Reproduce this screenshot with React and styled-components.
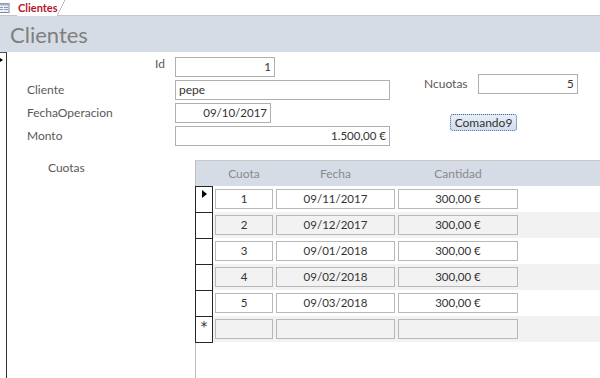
import React from 'react'
import styled, { createGlobalStyle } from 'styled-components'

const GlobalStyle = createGlobalStyle`
  html, body { margin: 0; padding: 0; background: #fff; }
  body { font-family: Lato, "Liberation Sans", sans-serif; }
`

const cuotas = [
  { n: 1, fecha: '09/11/2017', cantidad: '300,00 €' },
  { n: 2, fecha: '09/12/2017', cantidad: '300,00 €' },
  { n: 3, fecha: '09/01/2018', cantidad: '300,00 €' },
  { n: 4, fecha: '09/02/2018', cantidad: '300,00 €' },
  { n: 5, fecha: '09/03/2018', cantidad: '300,00 €' },
]

const Window = styled.div`
  width: 600px;
  height: 378px;
  display: flex;
  flex-direction: column;
  overflow: hidden;
  background: #fff;
`

const TabBar = styled.div`
  height: 15px;
  display: flex;
  align-items: stretch;
  border-bottom: 1px solid #c6c6c6;
  background: #fff;
`

const TabIcon = styled.svg`
  width: 10px;
  height: 10px;
  margin: 3px 0 0 0;
`

const Tab = styled.div`
  position: relative;
  margin-left: 7px;
  margin-bottom: -1px;
  padding: 0 2px 0 1px;
  width: 38px;
  background: #fff;
  color: #b3162c;
  font-size: 11px;
  font-weight: 700;
  line-height: 15px;
  &::after {
    content: '';
    position: absolute;
    top: 0;
    right: -7px;
    width: 8px;
    height: 16px;
    background: linear-gradient(to top left, transparent calc(50% - 0.6px), #9a9a9a, transparent calc(50% + 0.6px));
  }
`

const Header = styled.div`
  height: 36px;
  background: #d6dce5;
  display: flex;
  align-items: center;
  padding-left: 10px;
`

const Title = styled.div`
  font-size: 22px;
  color: #7f7f7f;
  line-height: 22px;
  padding-top: 1px;
`

const Body = styled.div`
  flex: 1;
  display: flex;
  min-height: 0;
`

const FormSelector = styled.div`
  width: 6px;
  border-right: 1px solid #333;
  border-top: 1px solid #555;
  padding-top: 5px;
`

const SmallArrow = styled.div`
  width: 0;
  height: 0;
  border-top: 2px solid transparent;
  border-bottom: 2px solid transparent;
  border-left: 3px solid #000;
`

const Detail = styled.div`
  flex: 1;
  display: flex;
  flex-direction: column;
`

const TopArea = styled.div`
  display: flex;
  align-items: flex-start;
`

const FieldGrid = styled.div`
  display: grid;
  grid-template-columns: 148px auto;
  grid-auto-rows: 20px;
  row-gap: 3px;
  padding: 5px 0 0 20px;
`

const Label = styled.div`
  font-size: 12px;
  color: #595959;
  line-height: 16px;
  align-self: ${p => (p.$raise ? 'start' : 'center')};
  justify-self: ${p => (p.$right ? 'end' : 'start')};
  padding-right: ${p => (p.$right ? '10px' : '0')};
  margin-top: ${p => (p.$raise ? '-1px' : '0')};
`

const Field = styled.div`
  box-sizing: border-box;
  width: ${p => p.$w}px;
  height: 20px;
  border: 1px solid #b0b0b0;
  background: #fff;
  padding: 0 3px;
  font-size: ${p => (p.$num ? '11.5px' : '12px')};
  color: #333;
  line-height: 18px;
  text-align: ${p => p.$align || 'left'};
  white-space: nowrap;
`

const SidePanel = styled.div`
  display: flex;
  flex-direction: column;
  align-items: flex-start;
  margin-left: 34px;
  padding-top: 22px;
`

const InlineRow = styled.div`
  display: flex;
  align-items: center;
  gap: 10px;
`

const CommandButton = styled.button`
  box-sizing: border-box;
  margin: 20px 0 0 26px;
  width: 67px;
  height: 17px;
  padding: 0;
  border: 1px dotted #3f67a6;
  border-radius: 3px;
  background: linear-gradient(#e9eff8, #d2ddec);
  font-family: Lato, "Liberation Sans", sans-serif;
  font-size: 12px;
  color: #333;
  line-height: 15px;
`

const SubArea = styled.div`
  flex: 1;
  display: flex;
  margin-top: 14px;
`

const SubLabel = styled.div`
  box-sizing: border-box;
  width: 188px;
  padding-left: 41px;
  font-size: 12px;
  color: #595959;
  line-height: 16px;
`

const Subform = styled.div`
  flex: 1;
  border-left: 1px solid #bdbdbd;
  border-top: 1px solid #c8c8c8;
`

const SubHeader = styled.div`
  height: 25px;
  background: #d6dce5;
  display: flex;
  align-items: center;
  padding-left: 19px;
  gap: 3px;
`

const HeadCell = styled.div`
  width: ${p => p.$w}px;
  text-align: center;
  font-size: 12px;
  color: #8a8a8a;
`

const Row = styled.div`
  height: 26px;
  display: flex;
  align-items: stretch;
  background: ${p => (p.$alt ? '#f2f2f2' : '#fff')};
`

const RowSelector = styled.div`
  box-sizing: border-box;
  width: 18px;
  margin-left: -1px;
  border: 1px solid #262626;
  border-bottom: ${p => (p.$last ? '1px solid #262626' : 'none')};
  height: ${p => (p.$last ? '27px' : '26px')};
  background: #fff;
  display: flex;
  justify-content: center;
  padding-top: 3px;
`

const Pointer = styled.div`
  width: 0;
  height: 0;
  border-top: 4.5px solid transparent;
  border-bottom: 4.5px solid transparent;
  border-left: 5px solid #000;
  margin-left: 1px;
`

const NewMark = styled.div`
  font-size: 14px;
  line-height: 12px;
  color: #333;
  font-family: "DejaVu Sans", sans-serif;
`

const Cells = styled.div`
  display: flex;
  align-items: center;
  gap: 3px;
  padding-left: 2px;
`

const Cell = styled.div`
  box-sizing: border-box;
  width: ${p => p.$w}px;
  height: 20px;
  border: 1px solid #b8b8b8;
  background: ${p => (p.$alt ? '#f2f2f2' : '#fff')};
  text-align: center;
  font-size: 11.5px;
  color: #333;
  line-height: 18px;
`

const widths = [58, 119, 120]

const App = () => {
  return (
    <>
      <GlobalStyle />
      <Window>
        <TabBar>
          <TabIcon viewBox="0 0 10 10">
            <rect x="-3" y="0.5" width="12" height="9" fill="#eef2f7" stroke="#7d8ba0" />
            <rect x="-3" y="0.5" width="12" height="2" fill="#9fb1c9" />
            <line x1="-2" y1="4.5" x2="3" y2="4.5" stroke="#8a9ab0" />
            <line x1="4" y1="4.5" x2="8" y2="4.5" stroke="#8a9ab0" />
            <line x1="-2" y1="6.5" x2="3" y2="6.5" stroke="#8a9ab0" />
            <line x1="4" y1="6.5" x2="8" y2="6.5" stroke="#8a9ab0" />
          </TabIcon>
          <Tab>Clientes</Tab>
        </TabBar>
        <Header>
          <Title>Clientes</Title>
        </Header>
        <Body>
          <FormSelector>
            <SmallArrow />
          </FormSelector>
          <Detail>
            <TopArea>
              <FieldGrid>
                <Label $right $raise>Id</Label>
                <Field $w={100} $align="right" $num>1</Field>
                <Label>Cliente</Label>
                <Field $w={215}>pepe</Field>
                <Label>FechaOperacion</Label>
                <Field $w={96} $align="right" $num>09/10/2017</Field>
                <Label>Monto</Label>
                <Field $w={215} $align="right" $num>1.500,00 €</Field>
              </FieldGrid>
              <SidePanel>
                <InlineRow>
                  <Label>Ncuotas</Label>
                  <Field $w={100} $align="right" $num>5</Field>
                </InlineRow>
                <CommandButton>Comando9</CommandButton>
              </SidePanel>
            </TopArea>
            <SubArea>
              <SubLabel>Cuotas</SubLabel>
              <Subform>
                <SubHeader>
                  <HeadCell $w={widths[0]}>Cuota</HeadCell>
                  <HeadCell $w={widths[1]}>Fecha</HeadCell>
                  <HeadCell $w={widths[2]}>Cantidad</HeadCell>
                </SubHeader>
                {cuotas.map((c, i) => {
                  const alt = i % 2 === 1
                  return (
                    <Row key={c.n} $alt={alt}>
                      <RowSelector>{i === 0 && <Pointer />}</RowSelector>
                      <Cells>
                        <Cell $w={widths[0]} $alt={alt}>{c.n}</Cell>
                        <Cell $w={widths[1]} $alt={alt}>{c.fecha}</Cell>
                        <Cell $w={widths[2]} $alt={alt}>{c.cantidad}</Cell>
                      </Cells>
                    </Row>
                  )
                })}
                <Row $alt>
                  <RowSelector $last>
                    <NewMark>*</NewMark>
                  </RowSelector>
                  <Cells>
                    <Cell $w={widths[0]} $alt />
                    <Cell $w={widths[1]} $alt />
                    <Cell $w={widths[2]} $alt />
                  </Cells>
                </Row>
              </Subform>
            </SubArea>
          </Detail>
        </Body>
      </Window>
    </>
  )
}

export default App
